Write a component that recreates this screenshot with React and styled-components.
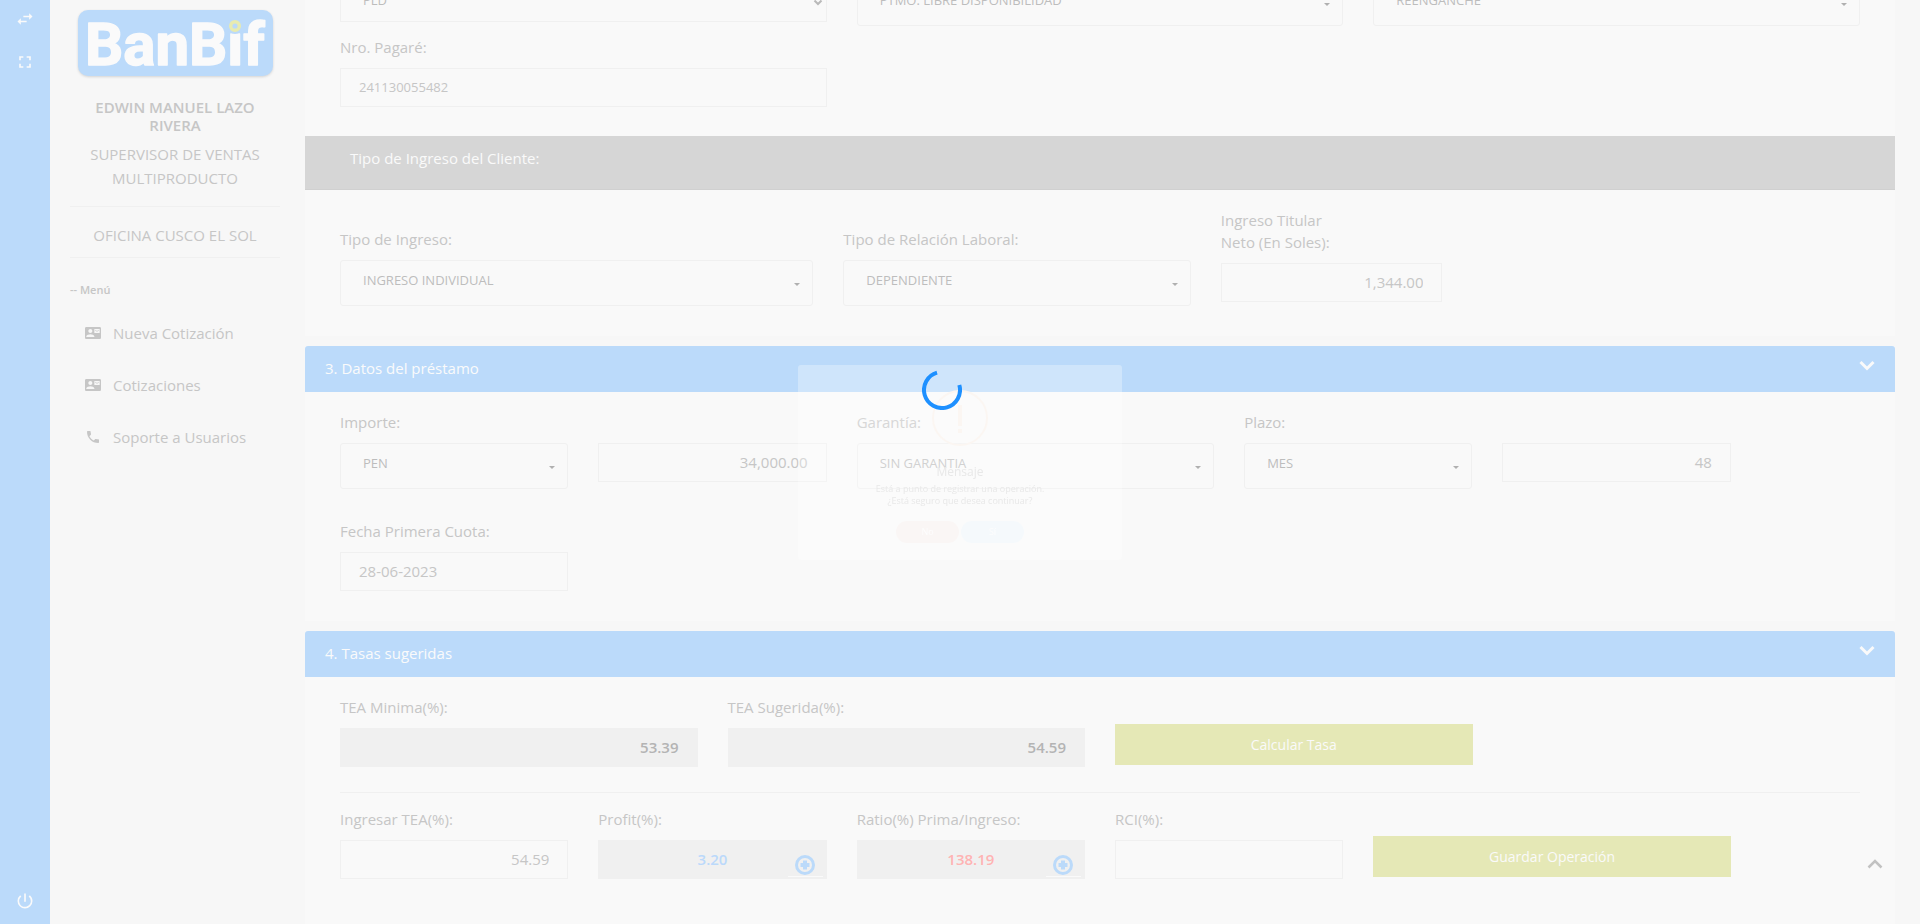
import React, { useId } from "react";
import styled, { createGlobalStyle, css } from "styled-components";
import {
  MdSwapHoriz,
  MdFullscreen,
  MdPowerSettingsNew,
  MdContactMail,
  MdPhone,
} from "react-icons/md";

const c = {
  page: "#f7f7f7",
  card: "#f9f9f9",
  blue: "#bbdafa",
  lime: "#e5e8b6",
  gray: "#d6d6d6",
  line: "#f0f0f0",
  text: "#c6c6c6",
  value: "#bdbdbd",
  white: "#fafafa",
};

const GlobalStyle = createGlobalStyle`
  * { box-sizing: border-box; }
  body {
    margin: 0;
    background: ${c.page};
    color: ${c.text};
    font: 400 15px/22px "Open Sans", "Liberation Sans", sans-serif;
  }
  button, input, select { font: inherit; color: inherit; margin: 0; }
`;

const Shell = styled.div`
  display: flex;
  min-height: 100vh;
`;

const Rail = styled.nav`
  flex: 0 0 50px;
  display: flex;
  flex-direction: column;
  align-items: center;
  gap: 23px;
  padding: 9px 0 13px;
  background: ${c.blue};
`;

const RailButton = styled.button`
  display: flex;
  padding: 0;
  border: 0;
  background: none;
  color: ${c.white};
  &:last-child { margin-top: auto; }
`;

const Sidebar = styled.aside`
  flex: 0 0 255px;
  padding: 3px 25px 0 20px;
`;

const Logo = styled.svg`
  display: block;
  width: 195px;
  height: 80px;
  margin: 0 0 15px 8px;
  filter: drop-shadow(0 1px 1px #d4d4d4);
`;

const UserName = styled.h1`
  margin: 0 10px 8px;
  font-size: 15px;
  font-weight: 600;
  line-height: 18px;
  text-align: center;
`;

const UserInfo = styled.p`
  margin: 0;
  padding: ${(p) => p.$pad};
  border-bottom: 1px solid ${c.line};
  line-height: 24px;
  text-align: center;
`;

const MenuTitle = styled.h2`
  margin: 21px 0;
  font-size: 11px;
  font-weight: 600;
  line-height: 22px;
`;

const Menu = styled.ul`
  margin: 0;
  padding: 0 0 0 15px;
  list-style: none;
`;

const MenuLink = styled.a`
  display: flex;
  align-items: center;
  gap: 12px;
  height: 22px;
  margin-bottom: 30px;
  color: inherit;
  text-decoration: none;
`;

const Main = styled.main`
  flex: 1;
  min-width: 0;
  display: flex;
  flex-direction: column;
  gap: 10px;
  padding-right: 25px;
  overflow: hidden;
`;

const Card = styled.section`
  display: flex;
  flex-direction: column;
  background: ${c.card};
  ${(p) => p.$grow && "flex: 1;"}
`;

const CardHeader = styled.header`
  display: flex;
  justify-content: space-between;
  padding: 11px 20px 13px;
  border-radius: 3px 3px 0 0;
  background: ${c.blue};
  color: ${c.white};
`;

const CardTitle = styled.h2`
  margin: 0;
  font-size: 15px;
  font-weight: 400;
`;

const Collapse = styled.button`
  display: flex;
  padding: 3px 0 0;
  border: 0;
  background: none;
`;

const SubHeader = styled.h3`
  margin: 29px 0 0;
  padding: 11px 45px 20px;
  border-bottom: 1px solid #d0d0d0;
  background: ${c.gray};
  color: ${c.white};
  font-size: 15px;
  font-weight: 400;
`;

const CardBody = styled.div`
  padding: ${(p) => p.$pad || "19px 20px 30px"};
`;

const Row = styled.div`
  display: flex;
  align-items: ${(p) => p.$align || "flex-start"};
  margin-top: ${(p) => p.$top || "0"};
`;

const Col = styled.div`
  flex: 0 0 calc(100% * ${(p) => p.$span} / 12);
  padding: ${(p) => p.$drop || "0"} 15px 0;
`;

const Label = styled.label`
  display: block;
  margin-bottom: 10px;
`;

const Control = styled.div`
  position: relative;
`;

const Input = styled.input`
  display: block;
  width: 100%;
  height: 39px;
  padding: 0 18px 2px;
  border: 1px solid ${c.line};
  border-radius: 0;
  outline: 0;
  background: transparent;
  font-size: ${(p) => (p.$small ? "13px" : "15px")};
  text-align: ${(p) => p.$align || "right"};
  ${(p) =>
    p.$filled &&
    css`
      background: ${c.line};
      color: ${p.$tone || "#b4b4b4"};
      font-weight: 600;
    `}
`;

const Select = styled.select`
  display: block;
  width: 100%;
  height: ${(p) => (p.$plain ? "38px" : "46px")};
  padding: 0 22px 7px;
  border: 1px solid ${c.line};
  border-radius: ${(p) => (p.$plain ? "0" : "3px")};
  outline: 0;
  appearance: none;
  background: transparent;
  color: ${c.value};
  font-size: 13px;
`;

const Caret = styled.span`
  position: absolute;
  top: 23px;
  right: 13px;
  border: 3px solid transparent;
  border-top-color: #b0b0b0;
  border-bottom: 0;
  pointer-events: none;
`;

const Arrow = styled.svg`
  position: absolute;
  top: 15px;
  right: 4px;
  pointer-events: none;
`;

const DetailButton = styled.button`
  position: absolute;
  right: 4px;
  bottom: 2px;
  display: flex;
  justify-content: center;
  width: 35px;
  padding: 0;
  border: 0;
  border-bottom: 1px solid ${c.white};
  background: none;
`;

const Action = styled.button`
  display: block;
  width: 100%;
  height: 41px;
  border: 0;
  background: ${c.lime};
  color: ${c.white};
  font-size: 14px;
`;

const Divider = styled.hr`
  margin: 25px 15px 15px;
  border: 0;
  border-top: 1px solid ${c.line};
`;

const Spinner = styled.svg`
  position: fixed;
  top: calc(50% - 92px);
  left: calc(50% - 38px);
`;

const Dialog = styled.div`
  position: fixed;
  inset: 1px 0 0;
  display: flex;
  flex-direction: column;
  align-items: center;
  width: 324px;
  height: 195px;
  margin: auto;
  padding-top: 25px;
  border-radius: 3px;
  background: rgba(255, 255, 255, 0.3);
  color: #e8e8e8;
`;

const DialogTitle = styled.h2`
  margin: 18px 0 3px;
  font-size: 12px;
  font-weight: 400;
  line-height: 16px;
`;

const DialogText = styled.p`
  margin: 0 0 14px;
  font-size: 9px;
  line-height: 12px;
  text-align: center;
`;

const DialogActions = styled.div`
  display: flex;
  gap: 2px;
`;

const DialogButton = styled.button`
  width: 63px;
  height: 22px;
  padding: 0;
  border: 0;
  border-radius: 11px;
  background: ${(p) => p.$tone};
  color: #fdfdfd;
  font-size: 9px;
`;

const ToTop = styled.a`
  position: fixed;
  right: 37px;
  bottom: 54px;
  display: flex;
`;

function Chevron({ up, color, width = 3 }) {
  return (
    <svg width="16" height="12" viewBox="0 0 16 12" fill="none" stroke={color} strokeWidth={width}>
      <path d={up ? "M1.5 9.5 8 3l6.500 6.500" : "M1.500 2 8 8.500 14.500 2"} />
    </svg>
  );
}

function TextField({ label, value, detail, ...rest }) {
  const id = useId();
  return (
    <>
      {label && <Label htmlFor={id}>{label}</Label>}
      <Control>
        <Input id={id} defaultValue={value} readOnly={rest.$filled} {...rest} />
        {detail && (
          <DetailButton type="button" aria-label={detail}>
            <svg width="22" height="22" viewBox="0 0 22 22" fill="none" stroke={c.blue}>
              <circle cx="11" cy="11" r="8.500" strokeWidth="3" />
              <path d="M11 6.500v9M6.500 11h9" strokeWidth="4" />
            </svg>
          </DetailButton>
        )}
      </Control>
    </>
  );
}

function SelectField({ label, value, plain, ...rest }) {
  const id = useId();
  return (
    <>
      {label && <Label htmlFor={id}>{label}</Label>}
      <Control>
        <Select id={id} $plain={plain} {...rest}>
          <option>{value}</option>
        </Select>
        {plain ? (
          <Arrow width="10" height="8" viewBox="0 0 10 8" fill="none" stroke="#b9b9b9" strokeWidth="2">
            <path d="M1.500 1.500 5 5l3.500-3.500" />
          </Arrow>
        ) : (
          <Caret />
        )}
      </Control>
    </>
  );
}

function Section({ title, grow, children }) {
  return (
    <Card $grow={grow}>
      <CardHeader>
        <CardTitle>{title}</CardTitle>
        <Collapse type="button" aria-label={title}>
          <Chevron color={c.white} />
        </Collapse>
      </CardHeader>
      <CardBody>{children}</CardBody>
    </Card>
  );
}

const menu = [
  { text: "Nueva Cotización", Icon: MdContactMail },
  { text: "Cotizaciones", Icon: MdContactMail },
  { text: "Soporte a Usuarios", Icon: MdPhone },
];

export default function App() {
  return (
    <>
      <GlobalStyle />
      <Shell>
        <Rail>
          <RailButton type="button" aria-label="Cambiar"><MdSwapHoriz size={20} /></RailButton>
          <RailButton type="button" aria-label="Pantalla completa"><MdFullscreen size={20} /></RailButton>
          <RailButton type="button" aria-label="Salir"><MdPowerSettingsNew size={20} /></RailButton>
        </Rail>

        <Sidebar>
          <Logo viewBox="0 -7 195 80" role="img" aria-label="BanBif">
            <rect width="195" height="66" rx="10" fill={c.blue} />
            <text x="7" y="55" fill={c.white} stroke={c.white} strokeWidth="1.500" strokeLinejoin="round" fontFamily="Roboto, sans-serif" fontWeight="700" fontSize="60">
              BanBif
            </text>
            <circle cx="157" cy="16" r="8" fill={c.blue} />
            <circle cx="157" cy="16" r="4.300" fill="none" stroke="#e8ebb0" strokeWidth="3.400" />
          </Logo>
          <UserName>EDWIN MANUEL LAZO RIVERA</UserName>
          <UserInfo $pad="0 0 16px">SUPERVISOR DE VENTAS MULTIPRODUCTO</UserInfo>
          <UserInfo $pad="16px 0 10px">OFICINA CUSCO EL SOL</UserInfo>
          <MenuTitle>-- Menú</MenuTitle>
          <Menu>
            {menu.map(({ text, Icon }) => (
              <li key={text}>
                <MenuLink href="#"><Icon size={16} />{text}</MenuLink>
              </li>
            ))}
          </Menu>
        </Sidebar>

        <Main>
          <Card>
            <CardBody $pad="0 20px">
              <Row $top="-20px" $align="center">
                <Col $span={4}><SelectField plain value="PLD" aria-label="Producto" /></Col>
                <Col $span={4}><SelectField value="PTMO. LIBRE DISPONIBILIDAD" aria-label="Subproducto" /></Col>
                <Col $span={4}><SelectField value="REENGANCHE" aria-label="Modalidad" /></Col>
              </Row>
              <Row $top="10px">
                <Col $span={4}><TextField label="Nro. Pagaré:" value="241130055482" $align="left" $small /></Col>
              </Row>
            </CardBody>
            <SubHeader>Tipo de Ingreso del Cliente:</SubHeader>
            <CardBody $pad="19px 60px 30px 20px">
              <Row>
                <Col $span={4} $drop="19px"><SelectField label="Tipo de Ingreso:" value="INGRESO INDIVIDUAL" /></Col>
                <Col $span={3} $drop="19px"><SelectField label="Tipo de Relación Laboral:" value="DEPENDIENTE" /></Col>
                <Col $span={2}>
                  <TextField label={<>Ingreso Titular<br />Neto (En Soles):</>} value="1,344.00" />
                </Col>
              </Row>
            </CardBody>
          </Card>

          <Section title="3. Datos del préstamo">
            <Row>
              <Col $span={2}><SelectField label="Importe:" value="PEN" /></Col>
              <Col $span={2} $drop="32px"><TextField value="34,000.00" aria-label="Monto" /></Col>
              <Col $span={3}><SelectField label="Garantía:" value="SIN GARANTIA" /></Col>
              <Col $span={2}><SelectField label="Plazo:" value="MES" /></Col>
              <Col $span={2} $drop="32px"><TextField value="48" aria-label="Número de cuotas" /></Col>
            </Row>
            <Row $top="31px">
              <Col $span={2}><TextField label="Fecha Primera Cuota:" value="28-06-2023" $align="left" /></Col>
            </Row>
          </Section>

          <Section title="4. Tasas sugeridas" grow>
            <Row>
              <Col $span={3}><TextField label="TEA Minima(%):" value="53.39" $filled /></Col>
              <Col $span={3}><TextField label="TEA Sugerida(%):" value="54.59" $filled /></Col>
              <Col $span={3} $drop="28px"><Action type="button">Calcular Tasa</Action></Col>
            </Row>
            <Divider />
            <Row>
              <Col $span={2}><TextField label="Ingresar TEA(%):" value="54.59" /></Col>
              <Col $span={2}><TextField label="Profit(%):" value="3.20" $filled $align="center" $tone="#bbd9fb" detail="Ver profit" /></Col>
              <Col $span={2}><TextField label="Ratio(%) Prima/Ingreso:" value="138.19" $filled $align="center" $tone="#ffb3b3" detail="Ver ratio" /></Col>
              <Col $span={2}><TextField label="RCI(%):" value="" /></Col>
              <Col $span={3} $drop="28px"><Action type="button">Guardar Operación</Action></Col>
            </Row>
          </Section>
        </Main>
      </Shell>

      <Dialog role="dialog" aria-label="Mensaje">
        <svg width="56" height="56" viewBox="0 0 56 56" fill="none" stroke="#fbf6f2" strokeWidth="2">
          <circle cx="28" cy="28" r="27" />
          <path d="M28 15v21M28 39v4" strokeWidth="4" />
        </svg>
        <DialogTitle>Mensaje</DialogTitle>
        <DialogText>Está a punto de registrar una operación.<br />¿Está seguro que desea continuar?</DialogText>
        <DialogActions>
          <DialogButton type="button" $tone="#faf6f5">No</DialogButton>
          <DialogButton type="button" $tone="#f5f9fc">Sí</DialogButton>
        </DialogActions>
      </Dialog>

      <Spinner width="40" height="40" viewBox="0 0 40 40" fill="none" role="img" aria-label="Cargando">
        <circle cx="20" cy="20" r="18" stroke="#1e90ff" strokeWidth="4" pathLength="100" strokeDasharray="75 25" transform="rotate(-16 20 20)" />
      </Spinner>

      <ToTop href="#" aria-label="Subir"><Chevron up color="#c2c2c2" width={2.5} /></ToTop>
    </>
  );
}
